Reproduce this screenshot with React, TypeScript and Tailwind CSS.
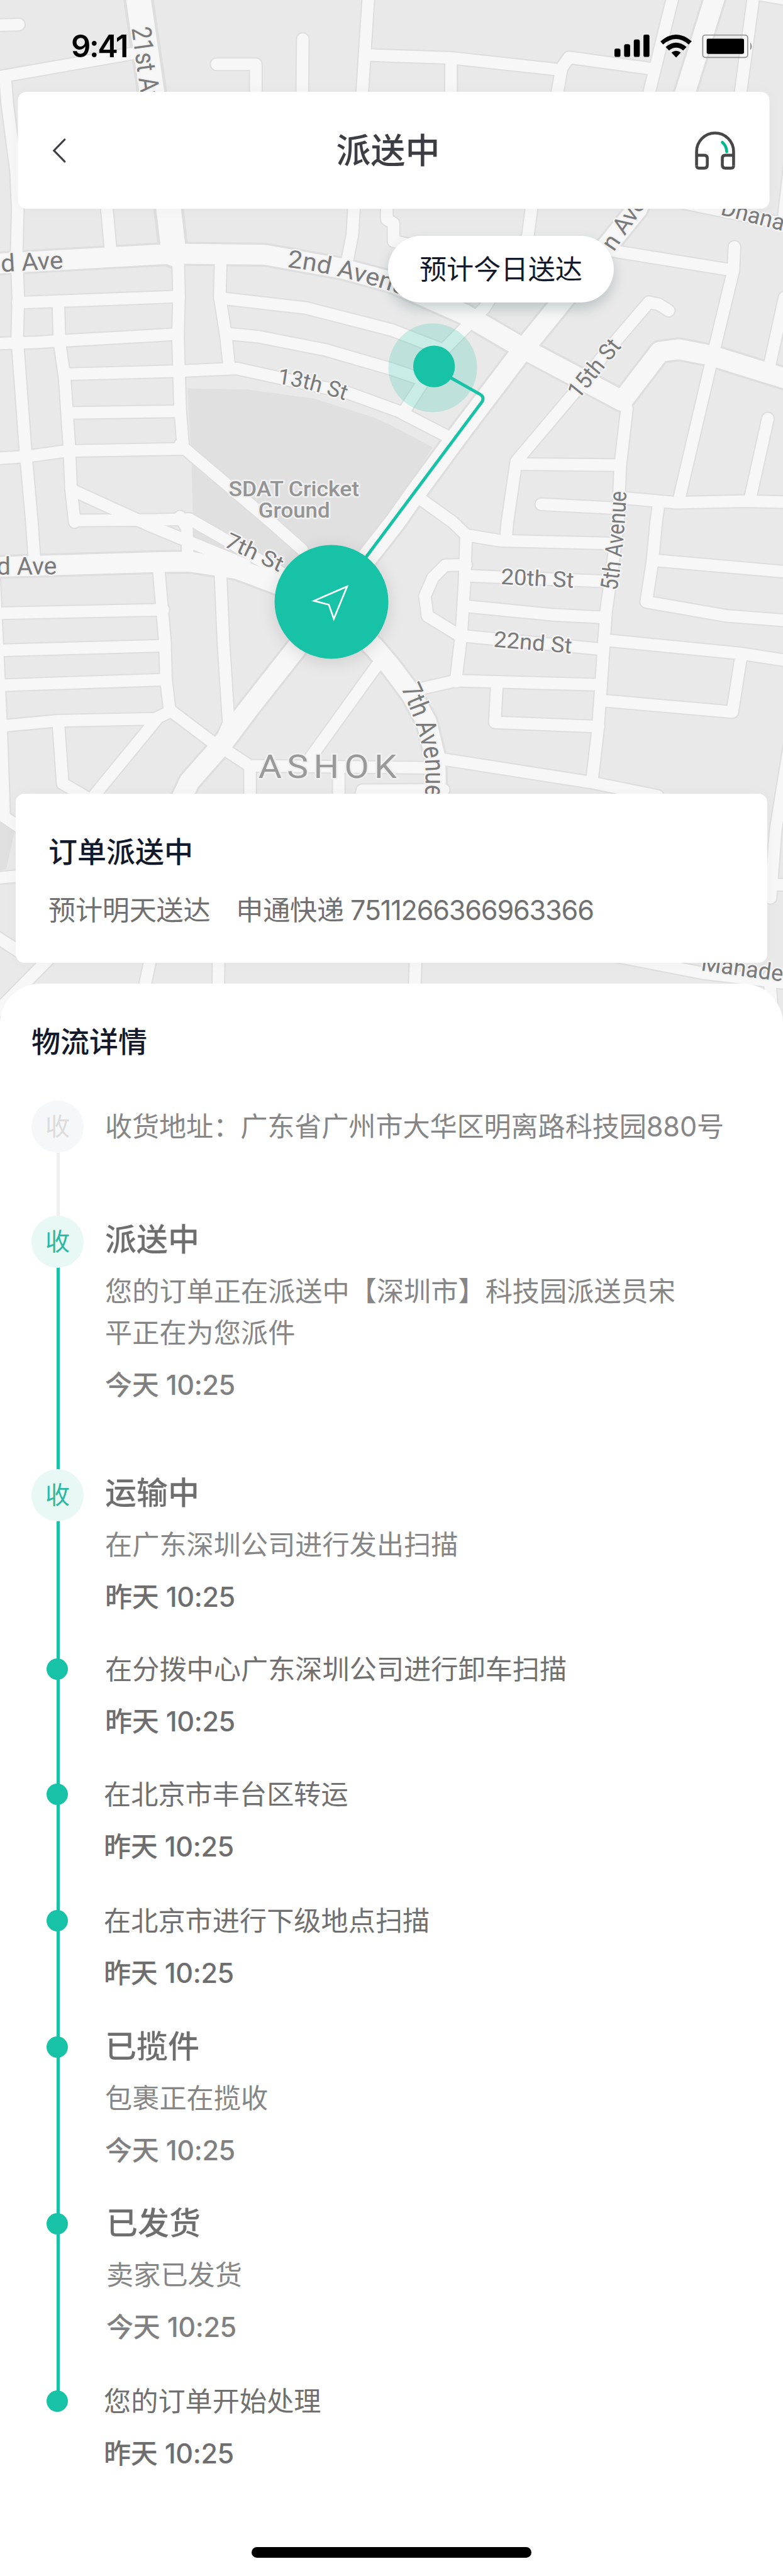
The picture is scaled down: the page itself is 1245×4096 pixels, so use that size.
import React from "react";

const GREEN = "#18c2a6";

const minorRoads = [
  "M10,147 L14,200 L31,330 L34,400 L32,488 L35,572 L33,649 L49,865 L61,1000 L66,1072",
  "M0,48 L36,47",
  "M-6,148 L251,103",
  "M415,123 L490,123 L490,200",
  "M580,75 L579,200",
  "M706,-10 L694,176 L678,400 L675,450 L665,500",
  "M700,105 L750,107 L865,111 L1075,134",
  "M864,111 L864,200",
  "M1060,230 L1068,176 L1076,130 L1090,110 L1243,131",
  "M1290,-10 L1244,176 L1200,360",
  "M1444,-10 L1419,176 L1400,380",
  "M1458,-10 L1510,-1",
  "M203,380 L212,480",
  "M741,380 L741,420 L754,428 L754,462 L800,472",
  "M1022,370 L1011,453 L955,545 L928,590 L848,672 L807,737 L776,785",
  "M1176,481 L1405,518",
  "M1407,473 L1405,518 L1365,683 L1300,960",
  "M1503,570 L1473,706",
  "M1516,290 L1502,410",
  "M1310,389 L1510,430",
  "M1281,595 L1262,583 L1243,579 L1161,675 L1097,756 L989,884 L972,1000 L969,1036",
  "M1192,764 L1201,783 L1188,894 L1184,1000 L1176,1065 L1161,1172 L1152,1306 L1145,1402 L1134,1497",
  "M989,889 L1188,891",
  "M1037,966 L1188,974",
  "M1195,954 L1295,963 L1427,960 L1510,962",
  "M1471,802 L1436,960",
  "M1262,964 L1257,1000 L1250,1075 L1238,1153 L1393,1180 L1510,1189",
  "M1250,1073 L1510,1096",
  "M800,952 L867,1000 L893,1025 L960,1036 L1170,1041",
  "M893,1025 L890,1115 L884,1214 L873,1306",
  "M893,1082 L853,1083 L829,1107 L814,1142 L819,1180 L884,1220",
  "M893,1103 L1168,1114",
  "M889,1161 L1061,1178 L1160,1183",
  "M884,1218 L1156,1244",
  "M800,1321 L873,1304 L1152,1312",
  "M952,1310 L948,1384 L1147,1392",
  "M1157,1226 L1420,1252 L1510,1266",
  "M1420,1256 L1403,1364 L1152,1342",
  "M840,1453 L1133,1499 L1260,1525",
  "M112,587 L114,656 L124,725 L133,859 L136,936 L143,1000",
  "M341,492 L343,565 L341,645 L345,783 L351,859",
  "M345,852 L519,1000 L579,1053",
  "M34,580 L343,568",
  "M-5,658 L67,656 L341,640",
  "M123,717 L343,711 L454,706 L531,723 L665,752 L764,788 L853,834",
  "M131,791 L345,788",
  "M-5,878 L48,875 L127,864 L351,860",
  "M423,496 L421,568 L433,645 L439,702",
  "M421,571 L586,590 L750,632 L848,670",
  "M433,639 L495,645 L622,670 L750,707 L803,725",
  "M141,940 L290,1008 L470,1082",
  "M143,997 L300,996 L362,994 L420,1027 L560,1110",
  "M345,990 L358,1012 L360,1070",
  "M-12,1090 L-5,1240 L2,1390 L8,1565 L45,1590",
  "M-5,1175 L313,1168",
  "M-5,1246 L316,1237",
  "M-5,1313 L318,1302",
  "M2,1391 L108,1381 L297,1377 L328,1362",
  "M304,1090 L316,1230 L318,1302 L325,1360 L411,1425",
  "M422,1090 L428,1230 L438,1385 L423,1421",
  "M112,1387 L120,1501 L170,1530",
  "M300,1378 L182,1522",
  "M722,1275 L585,1465",
  "M425,1432 L478,1467 L830,1471",
  "M479,1467 L479,1530",
  "M649,1470 L649,1530",
  "M850,1513 L694,1514 L690,1530",
  "M-5,1682 L40,1678",
  "M-5,1796 L40,1825",
  "M115,1815 L-8,1940",
  "M292,1820 L275,1900",
  "M419,1820 L418,1900",
  "M797,1820 L794,1900",
  "M1150,1826 L1345,1864 L1510,1884",
  "M1474,1870 L1480,1950",
  "M1512,1430 L1486,1590 L1476,1720",
  "M1476,1695 L1510,1695",
];

const mediumRoads = [
  "M-5,505 L206,493 L335,486 L507,488 L653,514 L750,540 L890,602 L1003,668 L1192,768 L1264,674 L1300,669 L1362,681 L1510,727",
  "M-5,1086 L297,1077 L364,1076 L454,1090 L540,1122 L635,1165 L717,1240 L750,1279 L788,1330 L817,1383 L834,1452 L835,1497 L831,1530",
  "M1371,-10 L1313,176 L1221,400 L1003,668 L884,825 L790,953 L757,1000 L547,1268 L473,1362 L423,1429 L363,1497 L345,1535",
];

const wideRoads = ["M264,-10 L291,176 L323,400 L333,486"];

type Label = { id: string; d: string; text: string; size: number; length?: number };

const streetLabels: Label[] = [
  { id: "l1", d: "M2,521 L160,512", text: "d Ave", size: 47, length: 120 },
  { id: "l2", d: "M550,512 Q660,524 820,582", text: "2nd Avenue", size: 47, length: 258 },
  { id: "l3", d: "M531,735 Q600,743 720,788", text: "13th St", size: 42, length: 134 },
  { id: "l4", d: "M428,1046 L560,1108", text: "7th St", size: 42, length: 118 },
  { id: "l5", d: "M-6,1101 L150,1100", text: "d Ave", size: 47, length: 115 },
  { id: "l6", d: "M959,1119 L1120,1127", text: "20th St", size: 42, length: 140 },
  { id: "l7", d: "M945,1239 L1120,1254", text: "22nd St", size: 42, length: 150 },
  { id: "l8", d: "M1108,766 L1210,641", text: "15th St", size: 44, length: 132 },
  { id: "l9", d: "M1176,483 L1300,300", text: "n Avenue", size: 46 },
  { id: "l10", d: "M1182,1132 Q1197,1040 1201,920", text: "5th Avenue", size: 46, length: 192 },
  { id: "l11", d: "M768,1318 Q804,1395 814,1455 Q818,1500 810,1570", text: "7th Avenue", size: 52, length: 216 },
  { id: "l12", d: "M252,54 L290,330", text: "21st Avenue", size: 52, length: 240 },
  { id: "l13", d: "M1379,411 L1540,453", text: "Dhana", size: 44, length: 124 },
  { id: "l14", d: "M1342,1859 L1540,1886", text: "Mahade", size: 44, length: 158 },
];

function CityMap() {
  return (
    <svg
      className="absolute left-0 top-0 h-[1660px] w-[1245px]"
      viewBox="0 0 1500 2000"
      fill="none"
      strokeLinejoin="round"
      strokeLinecap="round"
      fontFamily="Roboto, sans-serif"
    >
      <rect width="1500" height="2000" fill="#e9e9e9" />
      <path
        d="M359,744 L474,746 L603,764 L717,800 L750,815 L829,857 L750,978 L640,1130 L450,1080 L371,1062 L367,886 Z"
        fill="#e0e0e0"
      />
      <path d="M0,1575 L28,1592 L12,1665 L0,1668 Z" fill="#e0e0e0" />
      <g stroke="#dedede">
        {minorRoads.map((d) => <path key={d} d={d} strokeWidth="27" />)}
        {mediumRoads.map((d) => <path key={d} d={d} strokeWidth="46" />)}
        {wideRoads.map((d) => <path key={d} d={d} strokeWidth="58" />)}
      </g>
      <g stroke="#f7f7f7">
        {minorRoads.map((d) => <path key={d} d={d} strokeWidth="22" />)}
        {mediumRoads.map((d) => <path key={d} d={d} strokeWidth="38" />)}
        {wideRoads.map((d) => <path key={d} d={d} strokeWidth="47" />)}
      </g>
      <g fill="#7a7a7a" stroke="#f4f4f4" strokeWidth="6" paintOrder="stroke">
        {streetLabels.map((l) => (
          <React.Fragment key={l.id}>
            <path id={l.id} d={l.d} fill="none" stroke="none" />
            <text fontSize={l.size} textLength={l.length} lengthAdjust="spacingAndGlyphs">
              <textPath href={`#${l.id}`} textLength={l.length} lengthAdjust="spacingAndGlyphs">{l.text}</textPath>
            </text>
          </React.Fragment>
        ))}
      </g>
      <g fill="#949494" stroke="#f0f0f0" strokeWidth="6" paintOrder="stroke">
        <text x="438" y="950" fontSize="39" fontWeight="500" textLength="250" lengthAdjust="spacingAndGlyphs">SDAT Cricket</text>
        <text x="495" y="992" fontSize="39" fontWeight="500" textLength="137" lengthAdjust="spacingAndGlyphs">Ground</text>
        <text x="495" y="1490" fontSize="62" letterSpacing="9" textLength="275" lengthAdjust="spacingAndGlyphs" fill="#9a9a9a">ASHOK</text>
      </g>

      <circle cx="829" cy="704.5" r="85" fill={GREEN} fillOpacity="0.2" />
      <path d="M832,706 L919,755 Q928,760 924,769 L635,1156" stroke={GREEN} strokeWidth="6" />
      <circle cx="831.5" cy="702" r="40" fill={GREEN} />
      <circle cx="635" cy="1153" r="109" fill={GREEN} className="drop-shadow-[0_6px_16px_rgba(0,0,0,0.12)]" />
      <path
        d="M665,1123.5 L601.5,1151 L630,1158.5 L639.5,1185.5 Z"
        stroke="#fff"
        strokeWidth="3.2"
        strokeLinejoin="miter"
      />
    </svg>
  );
}

function StatusBar() {
  return (
    <div className="relative flex h-[146px] items-start justify-between pl-[113px] pr-[47px] pt-[54px]">
      <div className="text-[49px] font-semibold leading-[40px] tracking-[-2.4px] text-black">9:41</div>
      <svg className="h-[40px] w-[221px]" viewBox="0 0 266 48" fill="#000">
        <rect x="0" y="28" width="11.5" height="16" rx="3.5" />
        <rect x="18.5" y="19.5" width="11.5" height="24.5" rx="3.5" />
        <rect x="37" y="10.5" width="11.5" height="33.5" rx="3.5" />
        <rect x="55.5" y="1" width="11.5" height="43" rx="3.5" />
        <path d="M88,14 Q118,-12 148,14 L142,20 Q118,-1 93,20 Z" />
        <path d="M98,25 Q118,8 138,25 L131.500,31.500 Q118,21 104.500,31.500 Z" />
        <path d="M109,35.500 Q118,28.500 127,35.500 L118,45 Z" />
        <rect x="169" y="2" width="86" height="43" rx="5" fill="none" stroke="#8f8f8f" strokeWidth="2" />
        <rect x="176.500" y="9" width="71.500" height="29" rx="3" />
        <path d="M260,16 Q266,23.500 260,31 Z" fill="#8f8f8f" />
      </svg>
    </div>
  );
}

function HeaderCard() {
  return (
    <header className="relative mx-auto flex h-[186px] w-[1195px] translate-x-[3.5px] items-center justify-between rounded-[14px] bg-white pl-[55px] pr-[54px] shadow-[0_0_24px_rgba(0,0,0,0.03)]">
      <svg className="h-[40px] w-[22px]" viewBox="0 0 26 48" fill="none" stroke="#3d3e43" strokeWidth="3.6" strokeLinecap="round">
        <path d="M23,3.500 L2.500,24.500 L23,45.500" />
      </svg>
      <h1 className="absolute inset-x-0 -ml-[18px] text-center text-[55px] font-medium leading-[80px] text-[#3d3e43]">派送中</h1>
      <svg className="h-[61px] w-[65px]" viewBox="0 0 78 74" fill="none" stroke="#474747" strokeWidth="5.600">
        <path d="M3.300,66 V39 A35.700,36 0 0 1 74.700,39 V66" />
        <path d="M3.300,46 H18 Q24,46 24,52 V65 Q24,70.800 18,70.800 H8 Q3.300,70.800 3.300,66" />
        <path d="M74.700,46 H59 Q53,46 53,52 V65 Q53,70.800 59,70.800 H70 Q74.700,70.800 74.700,66" />
        <path d="M53,21 Q61,28 61.500,39" stroke="#00b88d" strokeLinecap="round" />
      </svg>
    </header>
  );
}

type Step = {
  title?: string;
  desc?: string;
  time?: string;
  badge?: boolean;
  height: string;
  shift?: string;
  timeTone?: string;
};

const steps: Step[] = [
  {
    title: "派送中",
    desc: "您的订单正在派送中【深圳市】科技园派送员宋平正在为您派件",
    time: "今天 10:25",
    badge: true,
    height: "h-[403px]",
    timeTone: "text-[#808080]",
  },
  { title: "运输中", desc: "在广东深圳公司进行发出扫描", time: "昨天 10:25", badge: true, height: "h-[277px]" },
  { desc: "在分拨中心广东深圳公司进行卸车扫描", time: "昨天 10:25", height: "h-[199px]" },
  { desc: "在北京市丰台区转运", time: "昨天 10:25", height: "h-[201px]", shift: "-ml-[2px]" },
  { desc: "在北京市进行下级地点扫描", time: "昨天 10:25", height: "h-[201px]", shift: "-ml-[2px]" },
  { title: "已揽件", desc: "包裹正在揽收", time: "今天 10:25", height: "h-[281px]", timeTone: "text-[#808080]" },
  {
    title: "已发货",
    desc: "卖家已发货",
    time: "今天 10:25",
    height: "h-[282px]",
    shift: "ml-[2px]",
    timeTone: "text-[#808080]",
  },
  { desc: "您的订单开始处理", time: "昨天 10:25", height: "h-[200px]", shift: "-ml-[2px]" },
];

function Badge({ muted = false }: { muted?: boolean }) {
  return (
    <span
      className={`relative flex size-[83px] items-center justify-center rounded-full text-[39px] ${
        muted ? "bg-[#f6f7f9] text-[#dcdcdc]" : "bg-[#e8f8f5] text-[#2cb8a2]"
      }`}
    >
      收
    </span>
  );
}

function TimelineStep({ step, last }: { step: Step; last: boolean }) {
  const titleOffset = step.badge ? "-mt-[3px]" : "-mt-[1px]";
  return (
    <li className={`flex ${step.height}`}>
      <div className="relative flex h-[84px] w-[83px] shrink-0 items-center justify-center">
        {!last && <span className={`absolute left-[40px] top-[42px] w-[5px] bg-[#18c2a6] ${step.height}`} />}
        {step.badge ? <Badge /> : <span className="relative -left-px size-[34px] rounded-full bg-[#18c2a6]" />}
      </div>
      <div className={`pl-[34px] ${step.shift ?? ""}`}>
        {step.title ? (
          <>
            <h3 className={`${titleOffset} h-[84px] text-[50px] font-medium leading-[84px] text-[#6e6e6e]`}>{step.title}</h3>
            <p className="mt-[7px] w-[925px] text-[43.2px] leading-[66px] text-[#868686]">{step.desc}</p>
            <p
              className={`mt-[17px] text-[43.2px] font-medium leading-[66px] tracking-[-0.4px] ${step.timeTone ?? "text-[#6e6e6e]"}`}
            >
              {step.time}
            </p>
          </>
        ) : (
          <>
            <p className="text-[43.2px] leading-[84px] text-[#707070]">{step.desc}</p>
            <p className="mt-[8px] text-[43.2px] font-medium leading-[66px] tracking-[-0.4px] text-[#6e6e6e]">{step.time}</p>
          </>
        )}
      </div>
    </li>
  );
}

export default function App() {
  return (
    <main className="relative flex h-[4096px] w-[1245px] flex-col overflow-hidden bg-white font-['Inter','Noto_Sans_CJK_SC',sans-serif]" lang="zh-CN">
      <section className="relative flex h-[1564px] shrink-0 flex-col">
        <CityMap />
        <StatusBar />
        <HeaderCard />
        <div className="absolute left-[617px] top-[375px] flex h-[106px] w-[359px] items-center justify-center rounded-full bg-white text-[43.2px] text-[#131a2b] shadow-[0_10px_20px_rgba(30,70,75,0.22)]">
          预计今日送达
        </div>
        <div className="relative mb-[33px] ml-[25px] mt-auto h-[269px] w-[1195px] rounded-[14px] bg-white pl-[52px] pt-[58px] shadow-[0_0_24px_rgba(0,0,0,0.03)]">
          <h2 className="text-[46px] font-medium leading-[68px] text-[#131a2b]">订单派送中</h2>
          <p className="mt-[25px] flex text-[43.2px] leading-[68px] text-[#707070]">
            <span className="tracking-[-0.3px]">预计明天送达</span>
            <span className="ml-[41px] tracking-[-0.3px]">申通快递</span>
            <span className="ml-[10px] tracking-[-1.2px]">7511266366963366</span>
          </p>
        </div>
      </section>

      <section className="relative flex-1 rounded-t-[64px] bg-white px-[50px] pt-[58px]">
        <h2 className="text-[46px] font-medium leading-[68px] text-[#131a2b]">物流详情</h2>
        <ol className="mt-[59px]">
          <li className="flex h-[183px]">
            <div className="relative flex h-[84px] w-[83px] shrink-0 items-center justify-center">
              <span className="absolute left-[40px] top-[42px] h-[183px] w-[5px] bg-[#efefef]" />
              <Badge muted />
            </div>
            <p className="whitespace-nowrap pl-[34px] text-[43.2px] leading-[84px] tracking-[-0.15px] text-[#868686]">
              收货地址：广东省广州市大华区明离路科技园880号
            </p>
          </li>
          {steps.map((step, i) => (
            <TimelineStep key={i} step={step} last={i === steps.length - 1} />
          ))}
        </ol>
        <div className="absolute bottom-[29px] left-[400px] h-[17px] w-[445px] rounded-full bg-black" />
      </section>
    </main>
  );
}
